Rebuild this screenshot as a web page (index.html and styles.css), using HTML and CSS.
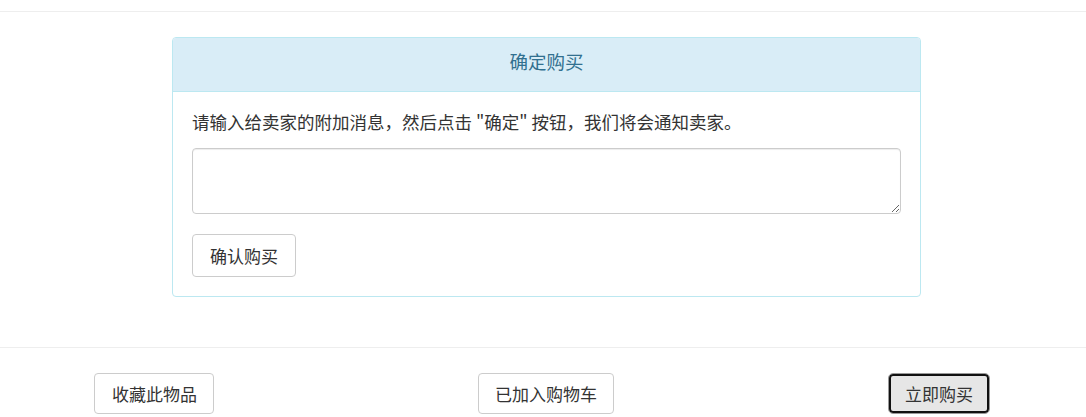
FILE: index.html
```html
<!DOCTYPE html>
<html lang="zh-CN">
<head>
<meta charset="utf-8">
<title>确定购买</title>
<link rel="stylesheet" href="styles.css">
</head>
<body>
<hr class="rule rule-top">
<div class="panel">
  <div class="panel-heading">确定购买</div>
  <div class="panel-body">
    <p class="msg">请输入给卖家的附加消息，然后点击 "确定" 按钮，我们将会通知卖家。</p>
    <textarea class="note"></textarea>
    <button class="btn btn-confirm" type="button">确认购买</button>
  </div>
</div>
<hr class="rule rule-bottom">
<div class="actions">
  <button class="btn btn-left" type="button">收藏此物品</button>
  <button class="btn btn-mid" type="button">已加入购物车</button>
  <button class="btn btn-right btn-focus" type="button">立即购买</button>
</div>
</body>
</html>
```

FILE: styles.css
```css
html, body {
  margin: 0;
  padding: 0;
  background: #fff;
}
body {
  font-family: "Noto Sans CJK SC", "Noto Sans", "Liberation Sans", sans-serif;
  font-size: 17px;
  color: #333;
  line-height: 25px;
}
.rule {
  border: 0;
  border-top: 1px solid #eee;
  margin: 0;
  height: 0;
}
.rule-top {
  margin-top: 11px;
}
.panel {
  box-sizing: border-box;
  width: 749px;
  margin: 25px 0 0 172px;
  border: 1px solid #bce8f1;
  border-radius: 4px;
  overflow: hidden;
}
.panel-heading {
  background: #d9edf7;
  color: #31708f;
  border-bottom: 1px solid #bce8f1;
  text-align: center;
  font-size: 18.5px;
  line-height: 25px;
  padding: 11px 0 17px 0;
}
.panel-body {
  padding: 17px 18px 19px 19px;
  display: flex;
  flex-direction: column;
  align-items: flex-start;
}
.msg {
  margin: 0 0 14px 0;
  font-size: 17.5px;
}
.note {
  box-sizing: border-box;
  width: 709px;
  height: 66px;
  border: 1px solid #ccc;
  border-radius: 4px;
  box-shadow: inset 0 1px 1px rgba(0,0,0,.075);
  margin: 0 0 20px 0;
  padding: 6px 12px;
  font: inherit;
}
.btn {
  box-sizing: border-box;
  font-family: inherit;
  font-size: 17px;
  line-height: 23px;
  color: #333;
  background: #fff;
  border: 1px solid #ccc;
  border-radius: 4px;
  padding: 8px 16px;
  margin: 0;
}
.btn-confirm {
  padding: 9px 17px;
}
.rule-bottom {
  margin-top: 50px;
}
.actions {
  display: grid;
  grid-template-columns: 1fr auto 1fr;
  align-items: start;
  padding: 25px 96px 0 94px;
}
.btn-left {
  justify-self: start;
  padding: 8px 16px 8px 17px;
}
.btn-mid {
  justify-self: center;
  margin-left: 8px;
}
.btn-right {
  justify-self: end;
}
.btn-focus {
  background: #e6e6e6;
  border: 1px solid #999;
  border-radius: 5px;
  box-shadow: inset 0 0 0 2px #111;
}
```
